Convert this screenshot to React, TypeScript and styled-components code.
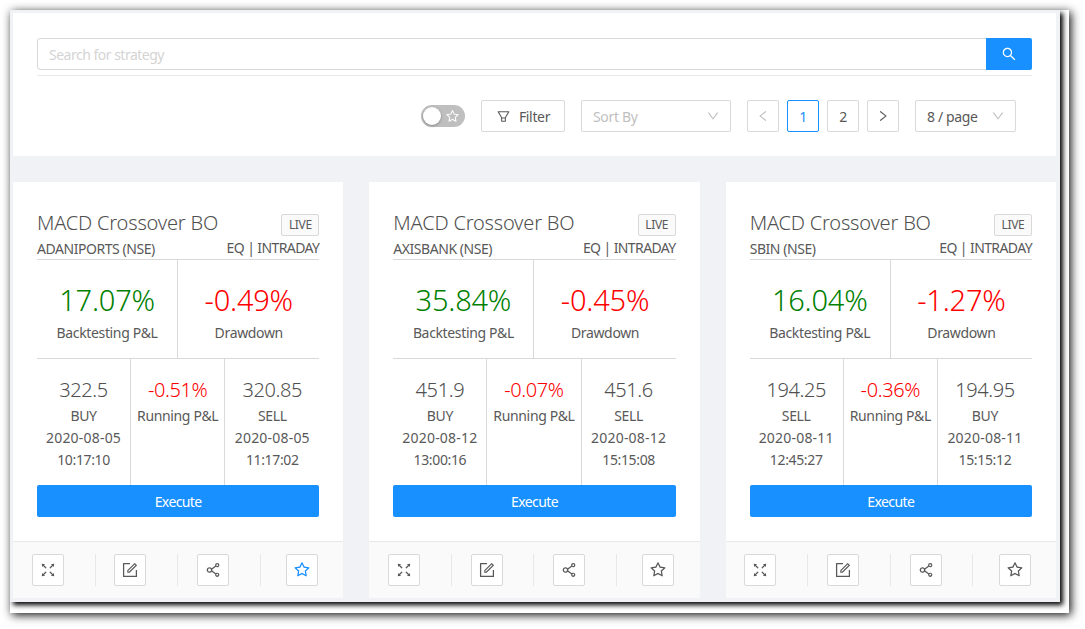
import React from "react";
import styled, { createGlobalStyle } from "styled-components";
import {
  AiOutlineSearch,
  AiOutlineFilter,
  AiOutlineLeft,
  AiOutlineRight,
  AiOutlineDown,
  AiOutlineStar,
  AiOutlineFullscreen,
  AiOutlineForm,
  AiOutlineShareAlt,
} from "react-icons/ai";

const Global = createGlobalStyle`
  html, body { margin: 0; padding: 0; background: #fff; }
  body { font-family: "Noto Sans", "Open Sans", sans-serif; font-size: 14px; color: #595959; letter-spacing: -0.35px; }
  * { box-sizing: border-box; }
`;

const Page = styled.div`
  width: 1085px;
  height: 629px;
  padding: 10px 0 0 10px;
  overflow: hidden;
`;
const Frame = styled.div`
  width: 1059px;
  height: 603px;
  background: #fff;
  box-shadow: 2px 2px 9px rgba(0, 0, 0, 0.95);
  overflow: hidden;
`;
const Inner = styled.div`
  width: 1050px;
  height: 592px;
  padding: 3px 4px 4px 3px;
  background: #f0f2f5;
  box-shadow: 3px 3px 5px #000;
`;
const TopPanel = styled.section`
  height: 143px;
  padding: 25px 24px 24px;
  background: #fff;
  display: flex;
  flex-direction: column;
`;
const SearchRow = styled.div`
  display: flex;
  height: 32px;
`;
const SearchInput = styled.input`
  flex: 1;
  height: 32px;
  padding: 0 11px;
  border: 1px solid #d9d9d9;
  border-right: 0;
  border-radius: 4px 0 0 4px;
  font: inherit;
  letter-spacing: -0.5px;
  color: #595959;
  outline: none;
  &::placeholder { color: #d4d4d4; }
`;
const SearchButton = styled.button`
  width: 46px;
  height: 32px;
  border: 0;
  border-radius: 0 2px 2px 0;
  background: #1890ff;
  color: #fff;
  display: flex;
  align-items: center;
  justify-content: center;
  font-size: 16px;
  padding: 0;
`;
const Rule = styled.div`
  height: 1px;
  margin-top: 5px;
  background: #e8e8e8;
`;
const Toolbar = styled.div`
  display: flex;
  justify-content: flex-end;
  align-items: center;
  margin-top: 24px;
  padding-right: 16px;
`;
const Switch = styled.div`
  width: 44px;
  height: 22px;
  border-radius: 11px;
  background: #bfbfbf;
  position: relative;
  display: flex;
  align-items: center;
  justify-content: flex-end;
  padding-right: 5px;
  color: #fff;
  font-size: 15px;
  margin-right: 16px;
  &::before {
    content: "";
    position: absolute;
    left: 2px;
    top: 2px;
    width: 18px;
    height: 18px;
    border-radius: 50%;
    background: #fff;
    box-shadow: 0 1px 3px rgba(0, 0, 0, 0.3);
  }
`;
const FilterButton = styled.button`
  width: 84px;
  height: 32px;
  border: 1px solid #d9d9d9;
  border-radius: 2px;
  background: #fff;
  color: #595959;
  font: inherit;
  letter-spacing: -0.35px;
  display: flex;
  align-items: center;
  justify-content: center;
  gap: 8px;
  padding: 0;
  margin-right: 16px;
`;
const Select = styled.div<{ $w: number; $gap: number; $muted?: boolean }>`
  width: ${(p) => p.$w}px;
  height: 32px;
  margin-right: ${(p) => p.$gap}px;
  padding: 0 10px 0 11px;
  border: 1px solid #d9d9d9;
  border-radius: 2px;
  background: #fff;
  color: ${(p) => (p.$muted ? "#bfbfbf" : "#595959")};
  display: flex;
  align-items: center;
  justify-content: space-between;
  svg { color: #bfbfbf; font-size: 14px; }
`;
const PageBtn = styled.div<{ $active?: boolean; $disabled?: boolean; $last?: boolean }>`
  width: 32px;
  height: 32px;
  margin-right: ${(p) => (p.$last ? 16 : 8)}px;
  border: 1px solid ${(p) => (p.$active ? "#1890ff" : "#d9d9d9")};
  border-radius: 2px;
  background: #fff;
  color: ${(p) => (p.$active ? "#1890ff" : p.$disabled ? "#bfbfbf" : "#595959")};
  display: flex;
  align-items: center;
  justify-content: center;
  svg { font-size: 14px; }
`;
const Cards = styled.div`
  margin-top: 26px;
  display: grid;
  grid-template-columns: repeat(3, 1fr);
  gap: 26px;
`;
const Card = styled.article`
  background: #fff;
  height: 416px;
  display: flex;
  flex-direction: column;
`;
const CardBody = styled.div`
  flex: 1;
  padding: 27px 24px 24px;
  display: flex;
  flex-direction: column;
`;
const Head = styled.div`
  height: 28px;
  display: flex;
  justify-content: space-between;
  align-items: flex-start;
`;
const Title = styled.h3`
  margin: 0;
  font-size: 20px;
  line-height: 28px;
  font-weight: 300;
  letter-spacing: -0.2px;
  color: #505050;
`;
const Tag = styled.span`
  margin-top: 5px;
  height: 22px;
  width: 38px;
  border: 1px solid #d9d9d9;
  border-radius: 2px;
  background: #fafafa;
  font-size: 12px;
  line-height: 20px;
  text-align: center;
`;
const Meta = styled.div`
  height: 23px;
  padding-top: 2px;
  line-height: 20px;
  display: flex;
  justify-content: space-between;
  border-bottom: 1px solid #d9d9d9;
  letter-spacing: -0.45px;
`;
const MetaRight = styled.span`
  margin-top: -1px;
  letter-spacing: -0.6px;
`;
const Stats = styled.div`
  height: 99px;
  display: grid;
  grid-template-columns: 1fr 1fr;
  border-bottom: 1px solid #d9d9d9;
`;
const Stat = styled.div`
  padding-top: 18px;
  text-align: center;
  &:first-child { border-right: 1px solid #d9d9d9; }
`;
const Big = styled.div<{ $color: string }>`
  font-size: 29px;
  line-height: 44px;
  font-weight: 300;
  letter-spacing: -0.2px;
  color: ${(p) => p.$color};
`;
const Label = styled.div`
  line-height: 22px;
`;
const DateLine = styled(Label)`
  letter-spacing: 0.2px;
`;
const Trades = styled.div`
  height: 126px;
  display: grid;
  grid-template-columns: repeat(3, 1fr);
`;
const Trade = styled.div`
  padding-top: 16px;
  text-align: center;
  white-space: nowrap;
  &:not(:last-child) { border-right: 1px solid #d9d9d9; }
`;
const Mid = styled.div<{ $color?: string }>`
  font-size: 20px;
  line-height: 30px;
  font-weight: 300;
  letter-spacing: -0.4px;
  color: ${(p) => p.$color || "#505050"};
`;
const Execute = styled.button`
  height: 32px;
  border: 0;
  border-radius: 2px;
  background: #1890ff;
  color: #fff;
  font: inherit;
  letter-spacing: -0.6px;
  padding: 0;
`;
const Actions = styled.ul`
  margin: 0;
  padding: 12px 0 12px;
  height: 57px;
  list-style: none;
  display: grid;
  grid-template-columns: repeat(4, 1fr);
  background: #fafafa;
  border-top: 1px solid #e8e8e8;
`;
const Action = styled.li<{ $last?: boolean }>`
  display: flex;
  justify-content: center;
  padding-right: ${(p) => (p.$last ? 0 : 12)}px;
  border-right: ${(p) => (p.$last ? "0" : "1px solid #e8e8e8")};
`;
const IconBtn = styled.button<{ $on?: boolean }>`
  width: 32px;
  height: 32px;
  border: 1px solid #d9d9d9;
  border-radius: 2px;
  background: #fff;
  color: ${(p) => (p.$on ? "#1890ff" : "#595959")};
  display: flex;
  align-items: center;
  justify-content: center;
  padding: 0;
  font-size: 18px;
`;

type D = {
  sym: string; bt: string; dd: string;
  p1: string; s1: string; d1: string; t1: string;
  run: string;
  p2: string; s2: string; d2: string; t2: string;
  fav?: boolean;
};
const data: D[] = [
  { sym: "ADANIPORTS (NSE)", bt: "17.07%", dd: "-0.49%", p1: "322.5", s1: "BUY", d1: "2020-08-05", t1: "10:17:10", run: "-0.51%", p2: "320.85", s2: "SELL", d2: "2020-08-05", t2: "11:17:02", fav: true },
  { sym: "AXISBANK (NSE)", bt: "35.84%", dd: "-0.45%", p1: "451.9", s1: "BUY", d1: "2020-08-12", t1: "13:00:16", run: "-0.07%", p2: "451.6", s2: "SELL", d2: "2020-08-12", t2: "15:15:08" },
  { sym: "SBIN (NSE)", bt: "16.04%", dd: "-1.27%", p1: "194.25", s1: "SELL", d1: "2020-08-11", t1: "12:45:27", run: "-0.36%", p2: "194.95", s2: "BUY", d2: "2020-08-11", t2: "15:15:12" },
];

export default function App() {
  return (
    <Page>
      <Global />
      <Frame>
        <Inner>
          <TopPanel>
            <SearchRow>
              <SearchInput placeholder="Search for strategy" />
              <SearchButton aria-label="Search"><AiOutlineSearch /></SearchButton>
            </SearchRow>
            <Rule />
            <Toolbar>
              <Switch><AiOutlineStar /></Switch>
              <FilterButton><AiOutlineFilter size={15} /> Filter</FilterButton>
              <Select $w={150} $gap={16} $muted>Sort By <AiOutlineDown /></Select>
              <PageBtn $disabled><AiOutlineLeft /></PageBtn>
              <PageBtn $active>1</PageBtn>
              <PageBtn>2</PageBtn>
              <PageBtn $last><AiOutlineRight /></PageBtn>
              <Select $w={101} $gap={0}>8 / page <AiOutlineDown /></Select>
            </Toolbar>
          </TopPanel>
          <Cards>
            {data.map((d) => (
              <Card key={d.sym}>
                <CardBody>
                  <Head>
                    <Title>MACD Crossover BO</Title>
                    <Tag>LIVE</Tag>
                  </Head>
                  <Meta>
                    <span>{d.sym}</span>
                    <MetaRight>EQ | INTRADAY</MetaRight>
                  </Meta>
                  <Stats>
                    <Stat>
                      <Big $color="#008000">{d.bt}</Big>
                      <Label>Backtesting P&amp;L</Label>
                    </Stat>
                    <Stat>
                      <Big $color="#ff0000">{d.dd}</Big>
                      <Label>Drawdown</Label>
                    </Stat>
                  </Stats>
                  <Trades>
                    <Trade>
                      <Mid>{d.p1}</Mid>
                      <Label>{d.s1}</Label>
                      <DateLine>{d.d1}</DateLine>
                      <Label>{d.t1}</Label>
                    </Trade>
                    <Trade>
                      <Mid $color="#ff0000">{d.run}</Mid>
                      <Label>Running P&amp;L</Label>
                    </Trade>
                    <Trade>
                      <Mid>{d.p2}</Mid>
                      <Label>{d.s2}</Label>
                      <DateLine>{d.d2}</DateLine>
                      <Label>{d.t2}</Label>
                    </Trade>
                  </Trades>
                  <Execute>Execute</Execute>
                </CardBody>
                <Actions>
                  <Action><IconBtn aria-label="Expand"><AiOutlineFullscreen /></IconBtn></Action>
                  <Action><IconBtn aria-label="Edit"><AiOutlineForm /></IconBtn></Action>
                  <Action><IconBtn aria-label="Share"><AiOutlineShareAlt /></IconBtn></Action>
                  <Action $last><IconBtn aria-label="Favourite" $on={d.fav}><AiOutlineStar /></IconBtn></Action>
                </Actions>
              </Card>
            ))}
          </Cards>
        </Inner>
      </Frame>
    </Page>
  );
}
